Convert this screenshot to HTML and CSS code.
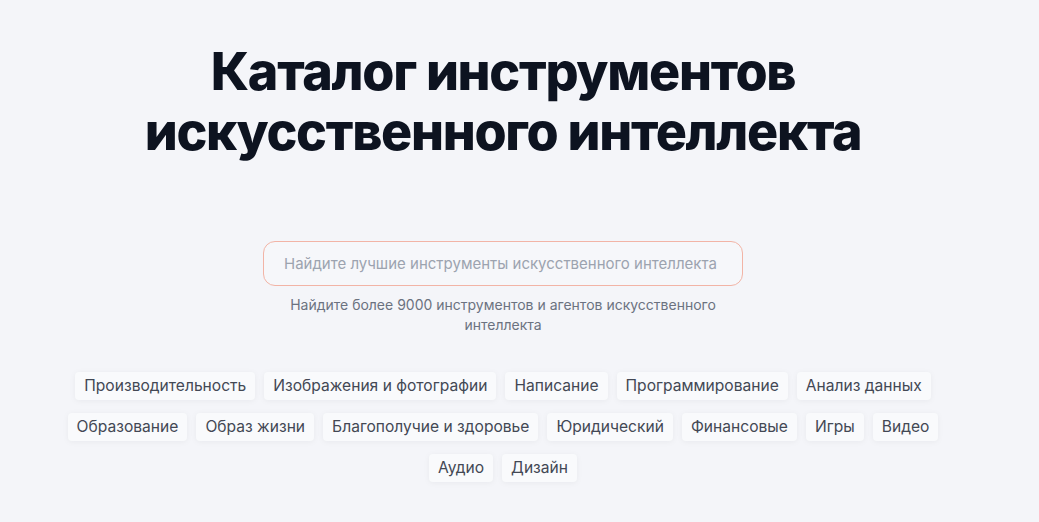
FILE: index.html
```html
<!DOCTYPE html>
<html lang="ru">
<head>
    <meta charset="UTF-8">
    <meta name="viewport" content="width=device-width, initial-scale=1.0">
    <title>Каталог инструментов ИИ</title>
    <link rel="stylesheet" href="styles.css">
</head>
<body>
    <main class="hero">
        <!-- Heading -->
        <h1 class="hero-title">Каталог инструментов<br>искусственного интеллекта</h1>

        <!-- Search -->
        <form class="search" onsubmit="return false">
            <input type="text" class="search-input" placeholder="Найдите лучшие инструменты искусственного интеллекта">
        </form>
        <p class="search-hint">Найдите более 9000 инструментов и агентов искусственного интеллекта</p>

        <!-- Categories -->
        <div class="tags">
            <a href="#" class="tag">Производительность</a>
            <a href="#" class="tag">Изображения и фотографии</a>
            <a href="#" class="tag">Написание</a>
            <a href="#" class="tag">Программирование</a>
            <a href="#" class="tag">Анализ данных</a>
            <a href="#" class="tag">Образование</a>
            <a href="#" class="tag">Образ жизни</a>
            <a href="#" class="tag">Благополучие и здоровье</a>
            <a href="#" class="tag">Юридический</a>
            <a href="#" class="tag">Финансовые</a>
            <a href="#" class="tag">Игры</a>
            <a href="#" class="tag">Видео</a>
            <a href="#" class="tag">Аудио</a>
            <a href="#" class="tag">Дизайн</a>
        </div>
    </main>
</body>
</html>
```

FILE: styles.css
```css
/* General Styles */
body {
    font-family: 'Inter', 'Noto Sans', sans-serif;
    background-color: #f4f5f9;
    margin: 0;
    padding: 0;
}

.hero {
    display: flex;
    flex-direction: column;
    align-items: center;
    padding: 42px 33px 40px 0;
}

.hero-title {
    margin: 0 0 79px;
    font-size: 52px;
    font-weight: 800;
    line-height: 60px;
    letter-spacing: -0.025em;
    text-align: center;
    color: #0d1320;
}

/* Search */
.search {
    width: 480px;
    margin: 0;
}

.search-input {
    box-sizing: border-box;
    width: 100%;
    height: 45px;
    padding: 0 20px;
    border: 1px solid #f2b4a6;
    border-radius: 12px;
    background-color: #f6f7fa;
    font-family: inherit;
    font-size: 15px;
    color: #374151;
    outline: none;
}

.search-input::placeholder {
    color: #9ca3af;
}

.search-hint {
    max-width: 448px;
    margin: 9px 0 37px;
    font-size: 14px;
    line-height: 20px;
    text-align: center;
    color: #6b7280;
}

/* Tags */
.tags {
    display: flex;
    flex-wrap: wrap;
    justify-content: center;
    gap: 13px 9px;
    max-width: 880px;
}

.tag {
    padding: 2px 9px;
    border-radius: 4px;
    background-color: #f9fafc;
    box-shadow: 0 1px 6px rgba(15, 23, 42, 0.05);
    font-size: 15.6px;
    line-height: 24px;
    color: #434854;
    text-decoration: none;
}

.tag:hover {
    background-color: #ffffff;
}
```
